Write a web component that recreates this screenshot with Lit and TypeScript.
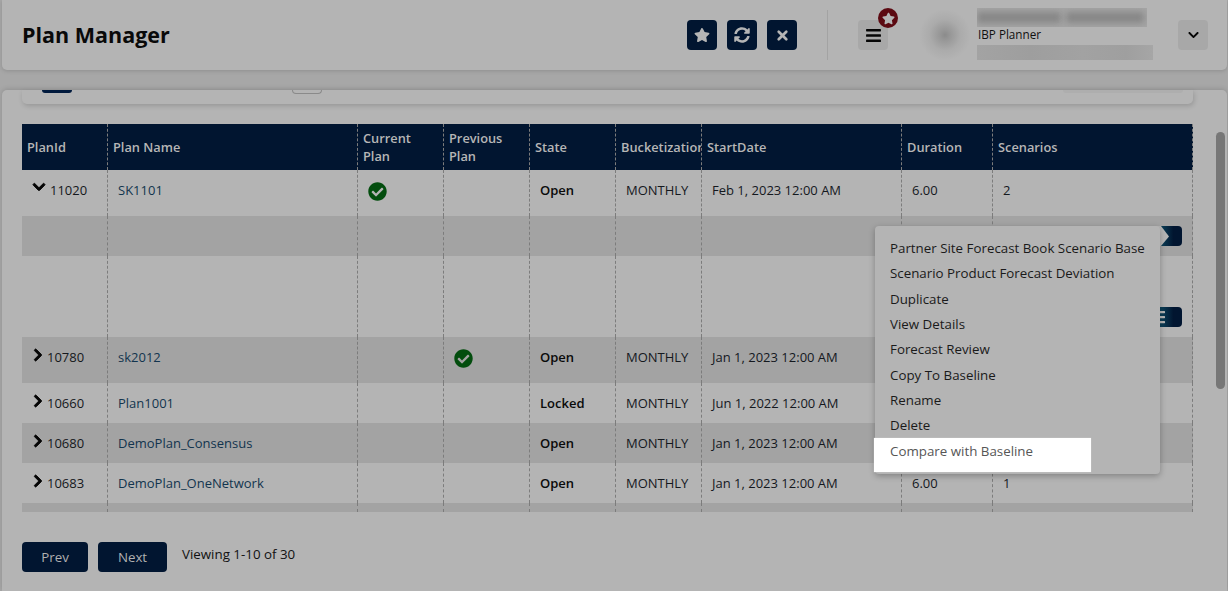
import { LitElement, html, css, svg } from "lit";
import { customElement } from "lit/decorators.js";

const fa = (vb: string, d: string, cls = "") => html`<svg class="${cls}" viewBox="${vb}"><path fill="currentColor" d="${d}"/></svg>`;
const STAR = "M259.3 17.8L194 150.2 47.9 171.5c-26.2 3.8-36.7 36.1-17.7 54.6l105.7 103-25 145.5c-4.5 26.3 23.2 46 46.4 33.7L288 439.6l130.7 68.7c23.2 12.2 50.9-7.4 46.4-33.7l-25-145.5 105.7-103c19-18.5 8.5-50.8-17.7-54.6L382 150.2 316.7 17.8c-11.7-23.6-45.6-24.1-57.4 0z";
const SYNC = "M370.72 133.28C339.458 104.008 298.888 87.962 255.848 88c-77.458.068-144.328 53.178-162.791 126.85-1.344 5.363-6.122 9.15-11.651 9.15H24.103c-7.498 0-13.194-6.807-11.807-14.176C33.933 94.924 134.813 8 256 8c66.448 0 126.791 26.136 171.315 68.685L463.03 40.97C478.149 25.851 504 36.559 504 57.941V192c0 13.255-10.745 24-24 24H345.941c-21.382 0-32.09-25.851-16.971-40.971l41.75-41.749zM32 296h134.059c21.382 0 32.09 25.851 16.971 40.971l-41.75 41.75c31.262 29.273 71.835 45.319 114.876 45.28 77.418-.07 144.315-53.144 162.787-126.849 1.344-5.363 6.122-9.15 11.651-9.15h57.304c7.498 0 13.194 6.807 11.807 14.176C478.067 417.076 377.187 504 256 504c-66.448 0-126.791-26.136-171.315-68.685L48.97 471.03C33.851 486.149 8 475.441 8 454.059V320c0-13.255 10.745-24 24-24z";
const CHECK = "M504 256c0 136.967-111.033 248-248 248S8 392.967 8 256 119.033 8 256 8s248 111.033 248 248zM227.314 387.314l184-184c6.248-6.248 6.248-16.379 0-22.627l-22.627-22.627c-6.248-6.249-16.379-6.249-22.628 0L216 308.118l-70.059-70.059c-6.248-6.248-16.379-6.248-22.628 0l-22.627 22.627c-6.248 6.248-6.248 16.379 0 22.627l104 104c6.249 6.25 16.379 6.25 22.628.001z";
const CR = "M285.476 272.971L91.132 467.314c-9.373 9.373-24.569 9.373-33.941 0l-22.667-22.667c-9.357-9.357-9.375-24.522-.04-33.901L188.505 256 34.484 101.255c-9.335-9.379-9.317-24.544.04-33.901l22.667-22.667c9.373-9.373 24.569-9.373 33.941 0L285.475 239.03c9.373 9.372 9.373 24.568.001 33.941z";
const CD = "M207.029 381.476L12.686 187.132c-9.373-9.373-9.373-24.569 0-33.941l22.667-22.667c9.357-9.357 24.522-9.375 33.901-.04L224 284.505l154.745-154.021c9.379-9.335 24.544-9.317 33.901.04l22.667 22.667c9.373 9.373 9.373 24.569 0 33.941L240.971 381.476c-9.373 9.372-24.569 9.372-33.942 0z";
const BARS = "M16 132h416c8.837 0 16-7.163 16-16V76c0-8.837-7.163-16-16-16H16C7.163 60 0 67.163 0 76v40c0 8.837 7.163 16 16 16zm0 160h416c8.837 0 16-7.163 16-16v-40c0-8.837-7.163-16-16-16H16c-8.837 0-16 7.163-16 16v40c0 8.837 7.163 16 16 16zm0 160h416c8.837 0 16-7.163 16-16v-40c0-8.837-7.163-16-16-16H16c-8.837 0-16 7.163-16 16v40c0 8.837 7.163 16 16 16z";

const check = fa("0 0 512 512", CHECK, "check");
const chevR = fa("0 0 320 512", CR, "chev");
const chevD = fa("0 0 448 512", CD, "chev down");

const columns = ["PlanId", "Plan Name", "Current Plan", "Previous Plan", "State", "Bucketization", "StartDate", "Duration", "Scenarios"];
const rows = [
  { id: "11020", open: true, name: "SK1101", cur: true, prev: false, state: "Open", date: "Feb 1, 2023 12:00 AM", dur: "6.00", sc: "2", cls: "tall" },
  { sub: 1, cls: "sub1 alt" },
  { sub: 2, cls: "sub2" },
  { id: "10780", name: "sk2012", cur: false, prev: true, state: "Open", date: "Jan 1, 2023 12:00 AM", dur: "6.00", sc: "1", cls: "tall alt" },
  { id: "10660", name: "Plan1001", state: "Locked", date: "Jun 1, 2022 12:00 AM", dur: "6.00", sc: "1", cls: "" },
  { id: "10680", name: "DemoPlan_Consensus", state: "Open", date: "Jan 1, 2023 12:00 AM", dur: "6.00", sc: "1", cls: "alt" },
  { id: "10683", name: "DemoPlan_OneNetwork", state: "Open", date: "Jan 1, 2023 12:00 AM", dur: "6.00", sc: "1", cls: "" },
  { stub: true, cls: "stub alt" },
] as any[];
const menu = ["Partner Site Forecast Book Scenario Base", "Scenario Product Forecast Deviation", "Duplicate", "View Details", "Forecast Review", "Copy To Baseline", "Rename", "Delete"];

@customElement("app-root")
export class AppRoot extends LitElement {
  static styles = css`
    :host { display: block; width: 1228px; height: 591px; overflow: hidden; position: relative; background: #a7a7a7; font-family: "Open Sans", sans-serif; font-size: 13.33px; color: #0c0c0c; }
    .top { margin: 0 1px 0 2px; height: 70px; background: #b4b4b4; border-radius: 0 0 5px 5px; box-shadow: 0 1px 4px rgba(0,0,0,.15); display: flex; align-items: center; padding: 0 19px 0 20px; box-sizing: border-box; }
    h1 { margin: 0; font-size: 21.5px; font-weight: 700; color: #090909; flex: 1; line-height: 1; }
    .ic { width: 30px; height: 30px; border-radius: 4px; background: #011530; color: #b5b5b5; display: flex; align-items: center; justify-content: center; margin-right: 10px; }
    .ic.last { margin-right: 0; }
    .ic svg { width: 16px; height: 16px; }
    .ic.x svg { width: 13px; height: 13px; }
    .sep { width: 1px; height: 50px; background: #a3a3a3; margin: 0 30px; }
    .menu-btn { width: 30px; height: 30px; border-radius: 4px; background: #a8a8a8; display: flex; align-items: center; justify-content: center; position: relative; color: #050505; }
    .menu-btn > svg { width: 15px; height: 17px; }
    .badge { position: absolute; left: 20px; top: -12px; width: 20px; height: 20px; border-radius: 50%; background: #5c0a12; color: #b5b5b5; display: flex; align-items: center; justify-content: center; }
    .badge svg { width: 13px; height: 13px; }
    .avatar { width: 54px; height: 50px; margin: 0 5px 0 30px; background: radial-gradient(circle at 50% 50%, #8b8b8b 0, #979797 14%, #ababab 42%, #b4b4b4 70%); }
    .user { width: 201px; height: 52px; display: flex; flex-direction: column; margin-top: -2px; }
    .blur1 { height: 19px; width: 170px; background: #a6a6a6; overflow: hidden; display: flex; gap: 5px; padding: 4px 0 0 0; box-sizing: border-box; }
    .blur1 i { display: block; height: 11px; background: #858585; filter: blur(3.5px); }
    .role { font-size: 11.7px; line-height: 15px; height: 18px; color: #101010; padding-left: 1px; }
    .blur2 { height: 15px; width: 176px; background: linear-gradient(90deg,#a3a3a3,#9e9e9e 30%,#a2a2a2 60%,#9f9f9f 85%,#a6a6a6); overflow: hidden; }
    .caret { width: 30px; height: 30px; border-radius: 4px; background: #a8a8a8; color: #050505; display: flex; align-items: center; justify-content: center; }
    .caret svg { width: 11px; height: 12px; }

    .card { position: absolute; left: 2px; right: 1px; top: 90px; bottom: 0; background: #b4b4b4; border-radius: 5px 5px 0 0; box-shadow: 0 -1px 5px rgba(0,0,0,.14); padding: 0 34px 0 20px; box-sizing: border-box; }
    .filters { height: 14px; width: 1171px; background: #b4b4b4; border-radius: 0 0 5px 5px; box-shadow: 1px 2px 5px rgba(0,0,0,.16); display: flex; align-items: flex-start; }
    .f1 { margin-left: 20px; width: 30px; height: 3px; background: #011a3d; border-radius: 0 0 4px 4px; }
    .f2 { margin-left: 220px; width: 28px; height: 3px; border: 1px solid #8a8a8a; border-top: 0; border-radius: 0 0 4px 4px; }
    .f3 { margin-left: auto; margin-right: 10px; width: 120px; height: 3px; background: #aeaeae; border-radius: 0 0 4px 4px; }

    .table { margin-top: 20px; width: 1171px; font-size: 13px; }
    .row { display: grid; grid-template-columns: 85px 250px 86px 86px 86px 86px 200px 91px 201px; align-items: stretch; }
    .cell { border-left: 1px dashed #7c7c7c; padding-left: 10px; display: flex; align-items: center; box-sizing: border-box; color: #14181e; white-space: nowrap; min-width: 0; }
    .cell:first-child { border-left: 0; padding-left: 0; }
    .cell:last-child { border-right: 1px dashed #7c7c7c; }
    .head { height: 46px; background: #011530; }
    .head .cell { color: #b6b6b6; font-weight: 600; font-size: 12.8px; padding: 0 5px; white-space: normal; line-height: 18px; overflow: hidden; }
    .row:not(.head) { height: 40px; }
    .row.tall { height: 46px; }
    .row.tall .cell { padding-bottom: 6px; }
    .row.sub1 { height: 40px; }
    .row.sub2 { height: 81px; }
    .row.stub { height: 9px; }
    .row.alt { background: #a3a3a3; }
    .id { padding-left: 10px !important; gap: 4px; color: #15181c; }
    .chev { width: 10px; height: 14px; margin-top: -5px; flex: none; color: #050505; margin-left: 1px; stroke: currentColor; stroke-width: 36; }
    .chev.down { width: 14px; height: 14px; margin-top: -6px; margin-left: 0; }
    .link { color: #12344e; }
    .b { font-weight: 600; color: #0a0a0a; }
    .check { width: 19px; height: 19px; margin-top: 3px; color: #034d0e; }
    .act { justify-content: flex-end; padding-right: 10px; }
    .act span { width: 48px; height: 20px; background: linear-gradient(90deg,#0b4058 54%,#0a3a52 60%,#011530 82%); border-radius: 4px; display: flex; align-items: center; justify-content: center; color: #b5b5b5; overflow: hidden; position: relative; }
    .sub2 .act { align-items: flex-end; padding-bottom: 10px; }
    .act svg { width: 14px; height: 16px; }
    .act .arrow { position: absolute; left: 21px; top: 0; width: 15px; height: 20px; }

    .pager { display: flex; margin-top: 30px; align-items: flex-start; gap: 10px; }
    .pager button { height: 30px; border: 0; border-radius: 4px; background: #011530; color: #b0b0b0; font: 400 13.33px "Open Sans", sans-serif; padding: 0; }
    .prev { width: 66px; }
    .next { width: 69px; }
    .view { margin-left: 5px; line-height: 24px; color: #111; }

    .popup { position: absolute; left: 875px; top: 226px; width: 285px; height: 248px; background: #b4b4b4; border-radius: 4px; box-shadow: 0 2px 6px rgba(0,0,0,.28); padding-top: 10.2px; box-sizing: border-box; }
    .popup div { height: 25.3px; line-height: 25px; padding-left: 15px; color: #1a1a1a; white-space: nowrap; }
    .popup .hl { position: absolute; left: -1px; top: 212px; width: 217px; height: 34px; background: #fff; color: #565656; box-sizing: border-box; line-height: 26px; padding-left: 16px; box-shadow: 0 0 1px #ddd; }
    .bar { position: absolute; left: 1216px; top: 132px; width: 9px; height: 257px; background: #777; border-radius: 5px; }
  `;

  render() {
    return html`
      <div class="top">
        <h1>Plan Manager</h1>
        <div class="ic">${fa("0 0 576 512", STAR)}</div>
        <div class="ic">${fa("0 0 512 512", SYNC)}</div>
        <div class="ic x last"><svg viewBox="0 0 24 24"><path d="M5 5l14 14M19 5L5 19" stroke="currentColor" stroke-width="5" stroke-linecap="round"/></svg></div>
        <div class="sep"></div>
        <div class="menu-btn">
          ${fa("0 0 448 512", BARS)}
          <div class="badge">${fa("0 0 576 512", STAR)}</div>
        </div>
        <div class="avatar"></div>
        <div class="user">
          <div class="blur1"><i style="width:84px"></i><i style="width:78px"></i></div>
          <div class="role">IBP Planner</div>
          <div class="blur2"></div>
        </div>
        <div class="caret">${fa("0 0 448 512", CD)}</div>
      </div>
      <div class="card">
        <div class="filters"><div class="f1"></div><div class="f2"></div><div class="f3"></div></div>
        <div class="table">
          <div class="row head">${columns.map((c) => html`<div class="cell">${c}</div>`)}</div>
          ${rows.map((r) => this.renderRow(r))}
        </div>
        <div class="pager">
          <button class="prev">Prev</button><button class="next">Next</button>
          <div class="view">Viewing 1-10 of 30</div>
        </div>
      </div>
      <div class="bar"></div>
      <div class="popup">
        ${menu.map((m) => html`<div>${m}</div>`)}
        <div class="hl">Compare with Baseline</div>
      </div>
    `;
  }

  renderRow(r: any) {
    if (r.sub || r.stub) {
      const icon = r.sub === 1
        ? html`<svg class="arrow" viewBox="0 0 15 20">${svg`<path fill="#b5b5b5" d="M0 0h6l8 10.5L6 20H0z"/>`}</svg>`
        : fa("0 0 448 512", BARS);
      return html`<div class="row ${r.cls}">${columns.map((_, i) => html`<div class="cell ${i === 8 && r.sub ? "act" : ""}">${i === 8 && r.sub ? html`<span>${icon}</span>` : ""}</div>`)}</div>`;
    }
    return html`<div class="row ${r.cls}">
      <div class="cell id">${r.open ? chevD : chevR}<span>${r.id}</span></div>
      <div class="cell"><span class="link">${r.name}</span></div>
      <div class="cell">${r.cur ? check : ""}</div>
      <div class="cell">${r.prev ? check : ""}</div>
      <div class="cell"><span class="b">${r.state}</span></div>
      <div class="cell">MONTHLY</div>
      <div class="cell">${r.date}</div>
      <div class="cell">${r.dur}</div>
      <div class="cell">${r.sc}</div>
    </div>`;
  }
}
